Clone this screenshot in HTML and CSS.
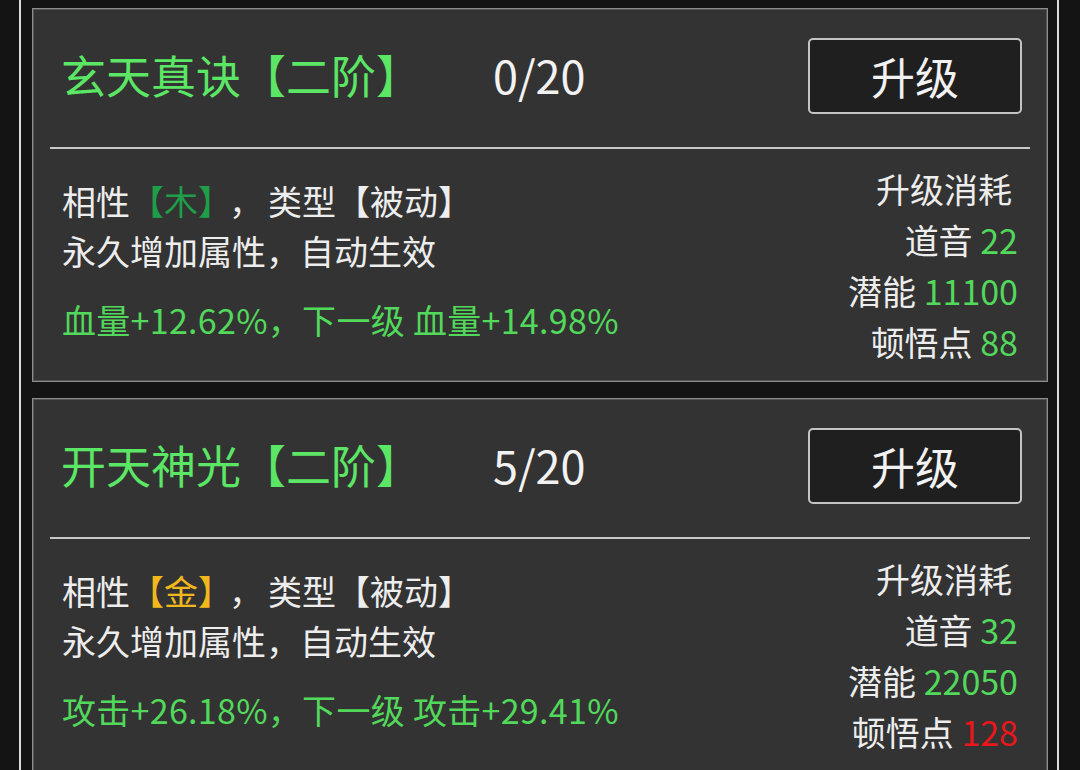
FILE: index.html
```html
<!DOCTYPE html>
<html lang="zh">
<head>
<meta charset="utf-8">
<link rel="stylesheet" href="styles.css">
</head>
<body>
<div class="frame">
  <div class="card">
    <div class="head">
      <div class="title">玄天真诀【二阶】</div>
      <div class="level">0/20</div>
      <div class="btn">升级</div>
    </div>
    <div class="divider"></div>
    <div class="body">
      <div class="info">
        <div class="line">相性<span class="wood">【木】</span><span class="sep">，</span>类型【被动】</div>
        <div class="line">永久增加属性，自动生效</div>
        <div class="line stat">血量+12.62%，下一级 血量+14.98%</div>
      </div>
      <div class="cost">
        <div class="line cost-title">升级消耗</div>
        <div class="line">道音 <span class="ok">22</span></div>
        <div class="line">潜能 <span class="ok">11100</span></div>
        <div class="line">顿悟点 <span class="ok">88</span></div>
      </div>
    </div>
  </div>
  <div class="card">
    <div class="head">
      <div class="title">开天神光【二阶】</div>
      <div class="level">5/20</div>
      <div class="btn">升级</div>
    </div>
    <div class="divider"></div>
    <div class="body">
      <div class="info">
        <div class="line">相性<span class="gold">【金】</span><span class="sep">，</span>类型【被动】</div>
        <div class="line">永久增加属性，自动生效</div>
        <div class="line stat">攻击+26.18%，下一级 攻击+29.41%</div>
      </div>
      <div class="cost">
        <div class="line cost-title">升级消耗</div>
        <div class="line">道音 <span class="ok">32</span></div>
        <div class="line">潜能 <span class="ok">22050</span></div>
        <div class="line">顿悟点 <span class="bad">128</span></div>
      </div>
    </div>
  </div>
</div>
</body>
</html>
```
FILE: styles.css
```css
html, body {
  margin: 0;
  padding: 0;
  background: #141414;
}
body {
  font-family: "Noto Sans CJK SC", "Noto Sans", sans-serif;
  color: #ededed;
  overflow: hidden;
  height: 770px;
}
.frame {
  margin: 0 21px 0 19px;
  border-left: 2px solid #dcdcdc;
  border-right: 2px solid #dcdcdc;
  padding: 8px 9px 0 11px;
  min-height: 770px;
  display: flex;
  flex-direction: column;
  gap: 16px;
}
.card {
  background: #333333;
  border: 1px solid #8c8c8c;
  box-shadow: inset 0 0 0 1px #555;
}
.head {
  display: flex;
  align-items: center;
  height: 76px;
  padding: 29px 25px 0 28px;
}
.title {
  font-size: 45px;
  color: #5ce665;
  width: 432px;
  line-height: 1;
  margin-top: -3px;
}
.level {
  font-size: 45px;
  color: #f2f2f2;
  line-height: 1;
  flex: 1;
  margin-top: -3px;
}
.btn {
  width: 210px;
  height: 72px;
  box-sizing: content-box;
  border: 2px solid #c4c4c4;
  border-radius: 5px;
  background: #1f1f1f;
  display: flex;
  align-items: center;
  justify-content: center;
  font-size: 44px;
  color: #f2f2f2;
}
.divider {
  height: 2px;
  background: #c8c8c8;
  margin: 33px 17px 0 17px;
}
.body {
  display: flex;
  justify-content: space-between;
  padding: 14px 29px 14px 29px;
}
.info {
  padding-top: 13px;
  font-size: 34px;
}
.info .line {
  line-height: 50px;
}
.info .stat {
  margin-top: 19px;
  color: #52d85b;
  letter-spacing: 0.3px;
}
.sep {
  margin: 0 5px 0 14px;
}
.cost {
  font-size: 34px;
  text-align: right;
}
.cost .line {
  line-height: 51px;
}
.cost .cost-title {
  padding-right: 6px;
}
.wood { color: #1e9e48; }
.gold { color: #f0b81c; }
.ok { color: #52d85b; }
.bad { color: #e8171b; }
```
